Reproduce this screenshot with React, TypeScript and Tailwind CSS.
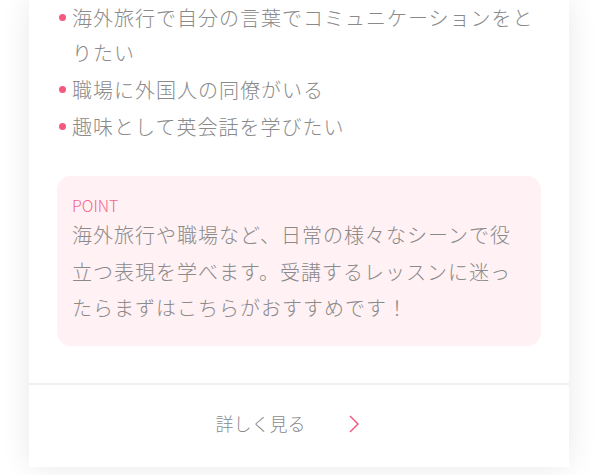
const items = [
  "海外旅行で自分の言葉でコミュニケーションをとりたい",
  "職場に外国人の同僚がいる",
  "趣味として英会話を学びたい",
];

export default function App() {
  return (
    <div className="h-[475px] w-full overflow-hidden bg-white font-['Noto_Sans_CJK_JP','Noto_Sans',sans-serif] font-light">
      <div className="mx-auto w-[540px] bg-white shadow-[0_0_28px_rgba(0,0,0,0.09)]">
        <div className="px-[28px] pb-[37px]">
          <ul className="flex flex-col gap-[2px] pl-[2px]">
            {items.map((item) => (
              <li
                key={item}
                className="flex text-[20px] leading-[35px] tracking-[1px] text-[#8a8a8a]"
              >
                <span className="mt-[14px] mr-[6px] h-[7px] w-[7px] shrink-0 rounded-full bg-[#f4587f]" />
                <span>{item}</span>
              </li>
            ))}
          </ul>
          <div className="mt-[32px] rounded-[14px] bg-[#fff1f4] px-[15px] pt-[17px] pb-[19px]">
            <p className="text-[16px] leading-[24px] text-[#f2678c]">POINT</p>
            <p className="text-[20px] leading-[36.5px] tracking-[1px] text-[#8a8a8a]">
              海外旅行や職場など、日常の様々なシーンで役立つ表現を学べます。受講するレッスンに迷ったらまずはこちらがおすすめです！
            </p>
          </div>
        </div>
        <div className="h-[2px] bg-[#f0f0f0]" />
        <a
          href="#"
          className="flex h-[82px] items-center justify-center pr-[24px] pb-[5px] text-[18px] text-[#8a8a8a]"
        >
          <span>詳しく見る</span>
          <svg
            className="ml-[43px] mt-[2px]"
            width="10"
            height="18"
            viewBox="0 0 10 18"
            fill="none"
            stroke="#f4587f"
            strokeWidth="1.5"
          >
            <polyline points="1,1 9,9 1,17" />
          </svg>
        </a>
      </div>
    </div>
  );
}
